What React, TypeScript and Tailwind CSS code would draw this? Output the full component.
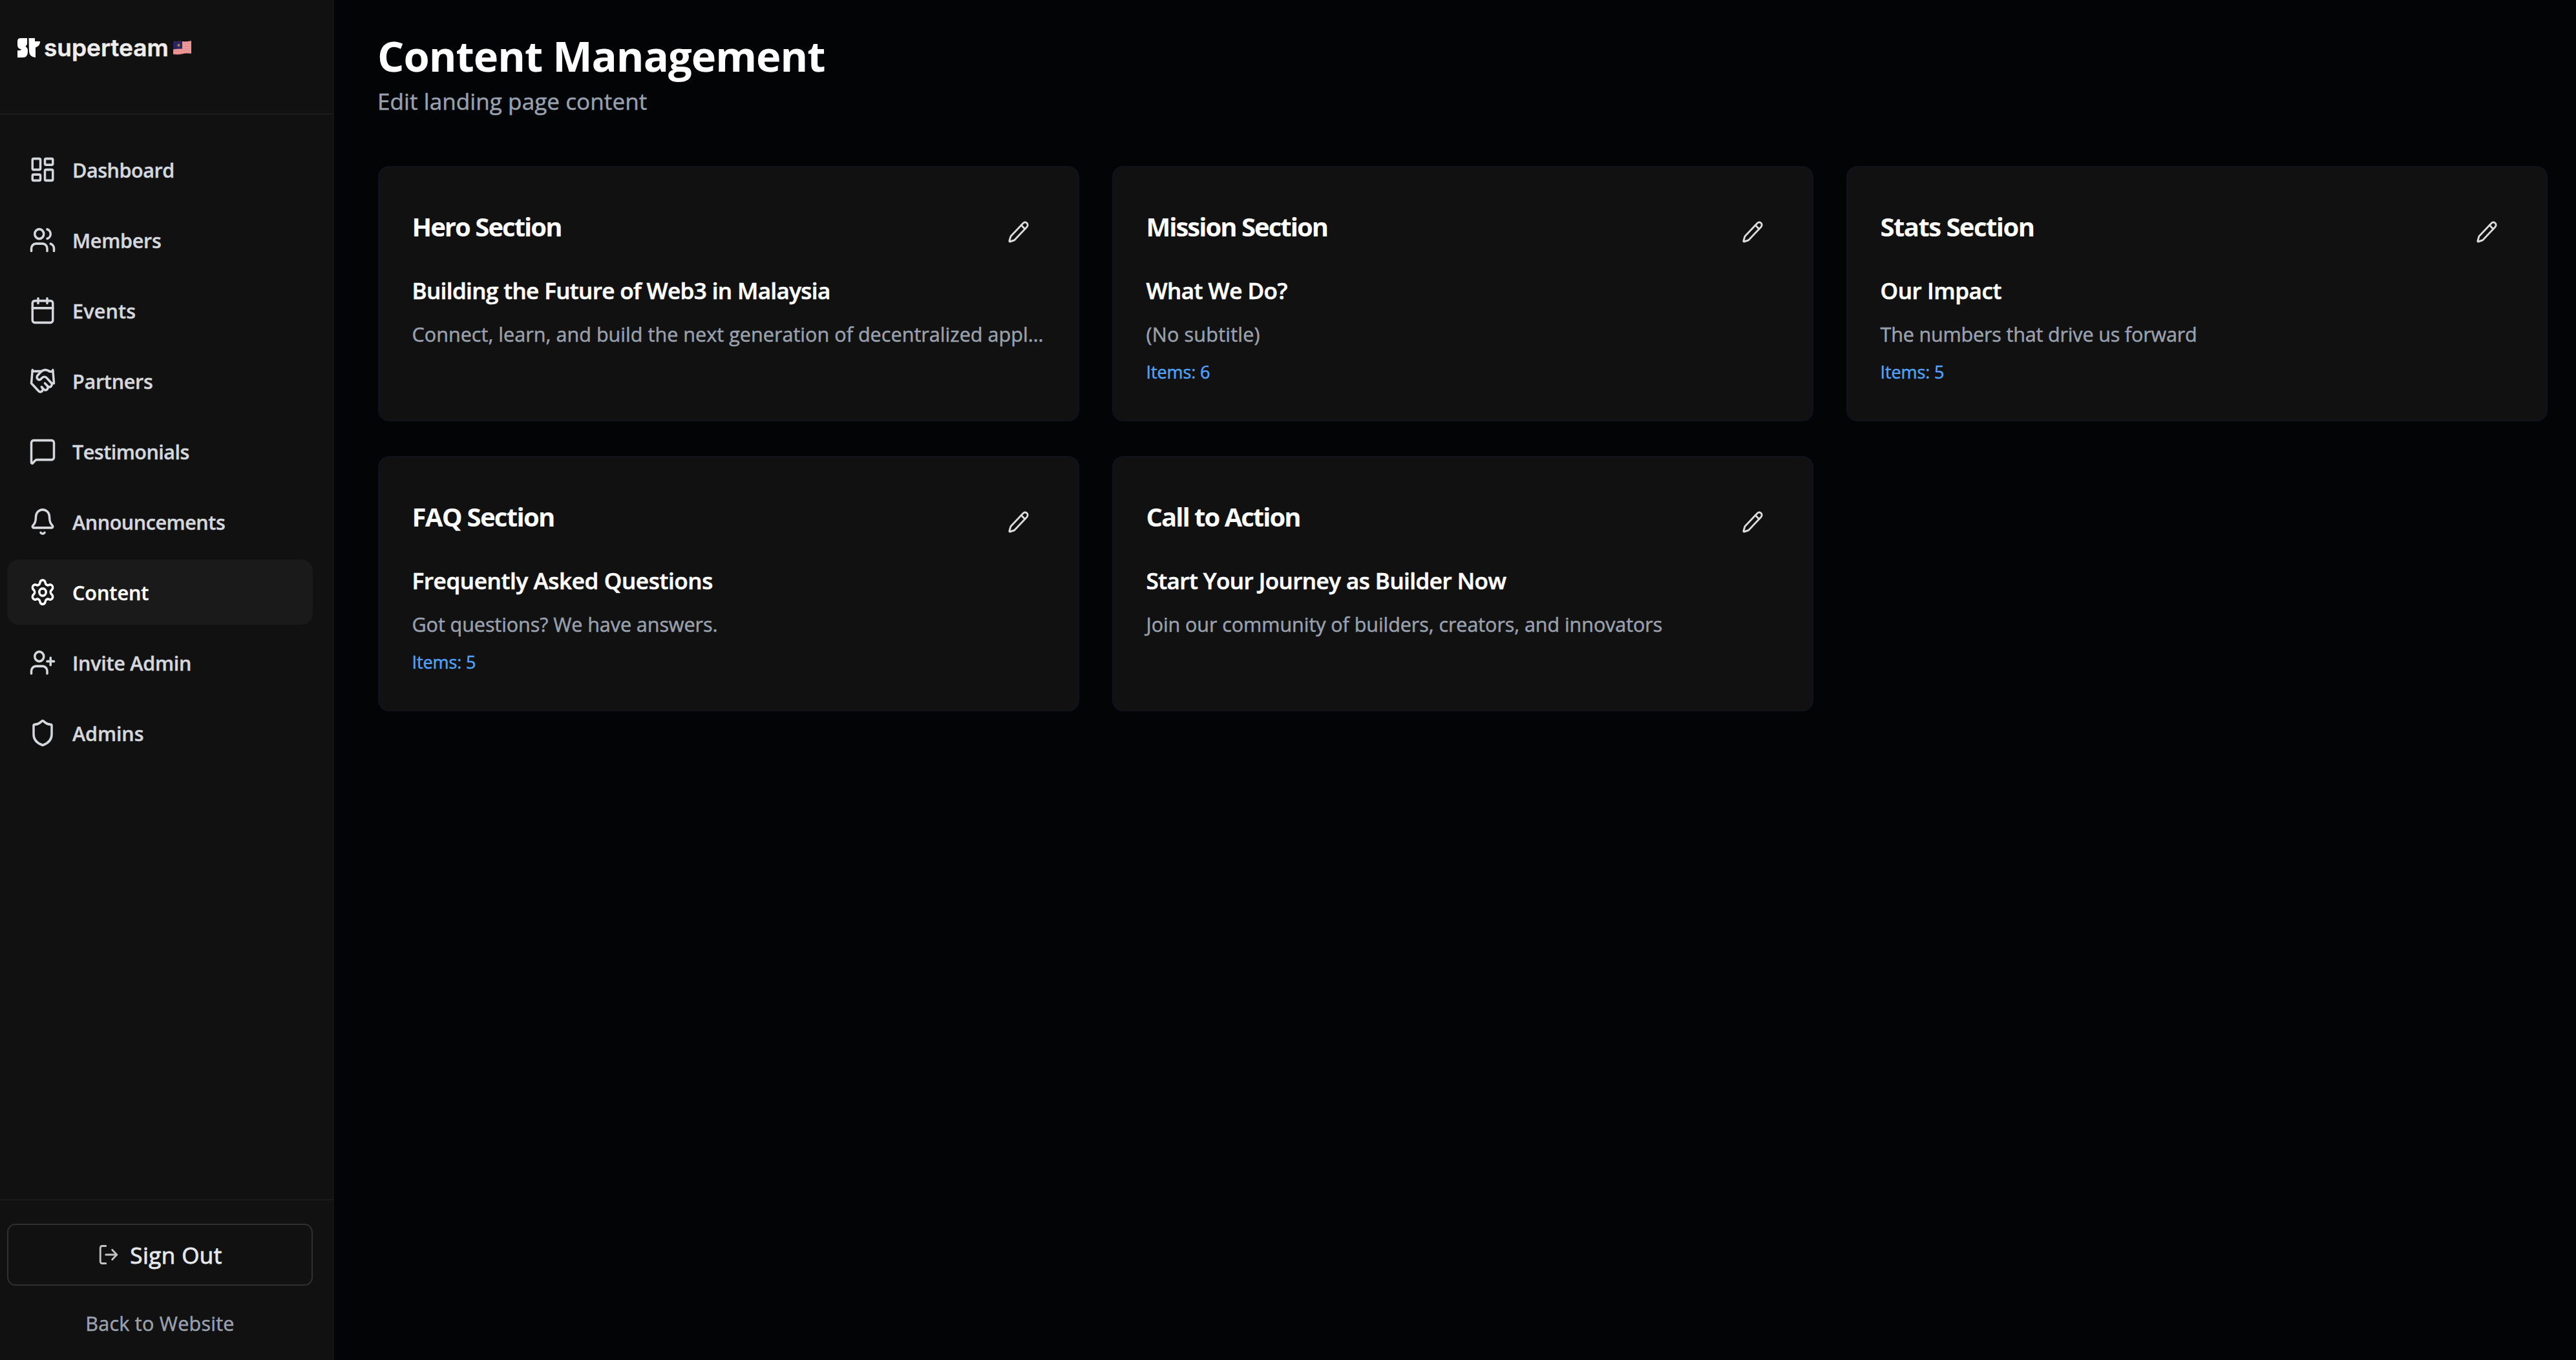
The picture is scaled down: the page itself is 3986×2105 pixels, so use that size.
import {
  Bell,
  Calendar,
  Handshake,
  LayoutDashboard,
  LogOut,
  MessageSquare,
  Pencil,
  Settings,
  Shield,
  UserPlus,
  Users,
  type LucideIcon,
} from "lucide-react";

type NavItem = {
  label: string;
  icon: LucideIcon;
  tracking: string;
};

type Section = {
  name: string;
  nameTracking: string;
  title: string;
  titleTracking: string;
  subtitle: string;
  subtitleTracking: string;
  items?: number;
};

const NAV_ITEMS: NavItem[] = [
  { label: "Dashboard",     icon: LayoutDashboard, tracking: "tracking-[-0.45px]" },
  { label: "Members",       icon: Users,           tracking: "tracking-[-0.25px]" },
  { label: "Events",        icon: Calendar,        tracking: "tracking-[0.2px]" },
  { label: "Partners",      icon: Handshake,       tracking: "tracking-[-0.25px]" },
  { label: "Testimonials",  icon: MessageSquare,   tracking: "tracking-[-0.5px]" },
  { label: "Announcements", icon: Bell,            tracking: "tracking-[-0.43px]" },
  { label: "Content",       icon: Settings,        tracking: "tracking-[0px]" },
  { label: "Invite Admin",  icon: UserPlus,        tracking: "tracking-[-0.25px]" },
  { label: "Admins",        icon: Shield,          tracking: "tracking-[-0.1px]" },
];

const SECTIONS: Section[] = [
  {
    name: "Hero Section",
    nameTracking: "tracking-[-1.95px]",
    title: "Building the Future of Web3 in Malaysia",
    titleTracking: "tracking-[-0.6px]",
    subtitle: "Connect, learn, and build the next generation of decentralized appl…",
    subtitleTracking: "tracking-[0.05px]",
  },
  {
    name: "Mission Section",
    nameTracking: "tracking-[-1.98px]",
    title: "What We Do?",
    titleTracking: "tracking-[-0.5px]",
    subtitle: "(No subtitle)",
    subtitleTracking: "tracking-[0.22px]",
    items: 6,
  },
  {
    name: "Stats Section",
    nameTracking: "tracking-[-1.55px]",
    title: "Our Impact",
    titleTracking: "tracking-[-0.4px]",
    subtitle: "The numbers that drive us forward",
    subtitleTracking: "tracking-[-0.16px]",
    items: 5,
  },
  {
    name: "FAQ Section",
    nameTracking: "tracking-[-1.68px]",
    title: "Frequently Asked Questions",
    titleTracking: "tracking-[-0.34px]",
    subtitle: "Got questions? We have answers.",
    subtitleTracking: "tracking-[-0.06px]",
    items: 5,
  },
  {
    name: "Call to Action",
    nameTracking: "tracking-[-1.98px]",
    title: "Start Your Journey as Builder Now",
    titleTracking: "tracking-[-0.52px]",
    subtitle: "Join our community of builders, creators, and innovators",
    subtitleTracking: "tracking-[-0.06px]",
  },
];

function Logo() {
  return (
    <div className="flex items-center">
      <svg viewBox="0 0 35 30" className="h-[30px] w-[35px]" fill="#fff">
        <path d="M5 0H15V9.5L12.5 13Q16 15 16 19V21Q16 30 8 30H0V19H4.5L6 17.5Q0 16 0 11V5Q0 0 5 0Z" />
        <path d="M17.500 0H27V5H35Q35 11.500 30 13.500L28 14.500V30Q18 29 18 20Z" />
      </svg>
      <span className="ml-[6px] font-['Inter'] text-[37px] leading-[44px] font-semibold text-[#ededed] [-webkit-text-stroke:0.5px]">
        superteam
      </span>
      <svg viewBox="0 0 28 22" className="ml-[7px] h-[22px] w-[28px]">
        <path d="M0 2Q8 0 14 1T28 0V20Q20 19 14 20.500T0 21Z" fill="#e8898a" />
        <path
          d="M14 3.500H28M14 7H28M14 10.500H28M0 14.200Q8 15 14 13.800T28 13.500M0 17.800Q8 18.500 14 17.300T28 17"
          stroke="#eda5a3"
          strokeWidth="1.300"
          fill="none"
        />
        <path d="M0 2Q8 0 14 1V12.500Q8 12 0 13.500Z" fill="#2b2463" />
        <circle cx="8.500" cy="7" r="2.200" fill="#8f7f45" />
      </svg>
    </div>
  );
}

function Sidebar({ active }: { active: string }) {
  return (
    <aside className="flex w-[517px] shrink-0 flex-col border-r border-[#151616] bg-[#111111]">
      <div className="h-[178px] border-b-[3px] border-[#181818] pt-[52px] pl-[27px]">
        <Logo />
      </div>

      <nav className="flex flex-1 flex-col gap-2 pt-[34px] pr-[32px] pl-[11px]">
        {NAV_ITEMS.map(({ label, icon: Icon, tracking }) => {
          const isActive = label === active;
          return (
            <a
              key={label}
              className={`flex h-[101px] items-center rounded-[18px] pl-[34px] ${
                isActive ? "bg-[#1a1a1a] text-white" : "text-[#d4d7dc]"
              }`}
            >
              <Icon className="h-[45px] w-[42px]" preserveAspectRatio="none" />
              <span
                className={`ml-[25px] pt-[1px] text-[30.5px] leading-[45px] font-semibold [-webkit-text-stroke:0.4px] ${tracking}`}
              >
                {label}
              </span>
            </a>
          );
        })}
      </nav>

      <div className="flex h-[249px] flex-col border-t-2 border-[#1a1a1a] pt-[36px] pr-[32px] pl-[11px]">
        <button className="flex h-[96px] items-center justify-center rounded-[13px] border-2 border-[#303030] text-[#e5e7eb]">
          <LogOut className="h-[36px] w-[34px] text-[#c4c4c4]" preserveAspectRatio="none" />
          <span className="ml-[16px] pt-[1px] text-[35px] leading-[54px] tracking-[0.46px] [-webkit-text-stroke:0.9px]">
            Sign Out
          </span>
        </button>
        <a className="mt-[36px] text-center text-[30.5px] leading-[45px] tracking-[0.26px] text-[#99a1af] [-webkit-text-stroke:0.5px]">
          Back to Website
        </a>
      </div>
    </aside>
  );
}

function SectionCard({ section }: { section: Section }) {
  return (
    <div className="flex h-[395px] flex-col rounded-[17px] border-2 border-[#10131c] bg-[#111111] pt-[50px] pr-[49px] pl-[50.5px]">
      <div className="flex h-[84px] items-center justify-between">
        <h2 className={`text-[40px] leading-[60px] font-bold text-white ${section.nameTracking}`}>{section.name}</h2>
        <button className="mt-4 mr-[26px] text-[#dcdcdc]">
          <Pencil className="h-[36px] w-[34px]" preserveAspectRatio="none" />
        </button>
      </div>
      <h3
        className={`mt-[30px] text-[35px] leading-[54px] font-semibold whitespace-nowrap text-white [-webkit-text-stroke:0.6px] ${section.titleTracking}`}
      >
        {section.title}
      </h3>
      <p
        className={`mt-[18px] text-[30.5px] leading-[45px] whitespace-nowrap text-[#99a1af] [-webkit-text-stroke:0.5px] ${section.subtitleTracking}`}
      >
        {section.subtitle}
      </p>
      {section.items !== undefined && (
        <p className="mt-[18px] text-[27px] leading-[36px] tracking-[-0.1px] text-[#51a2ff] [-webkit-text-stroke:0.5px]">
          Items: {section.items}
        </p>
      )}
    </div>
  );
}

export default function App() {
  return (
    <div className="flex h-[2105px] w-[3986px] overflow-hidden bg-[#020406] font-['Open_Sans',sans-serif]">
      <Sidebar active="Content" />
      <main className="flex-1 pt-[46px] pr-[44px] pl-[68px]">
        <header className="-ml-px h-[211px]">
          <h1 className="text-[65px] leading-[80px] font-bold tracking-[-0.95px] text-white">Content Management</h1>
          <p className="mt-1 text-[35px] leading-[54px] tracking-[0.1px] text-[#99a1af] [-webkit-text-stroke:0.5px]">
            Edit landing page content
          </p>
        </header>
        <div className="grid grid-cols-3 gap-x-[51px] gap-y-[54px]">
          {SECTIONS.map((section) => (
            <SectionCard key={section.name} section={section} />
          ))}
        </div>
      </main>
    </div>
  );
}
